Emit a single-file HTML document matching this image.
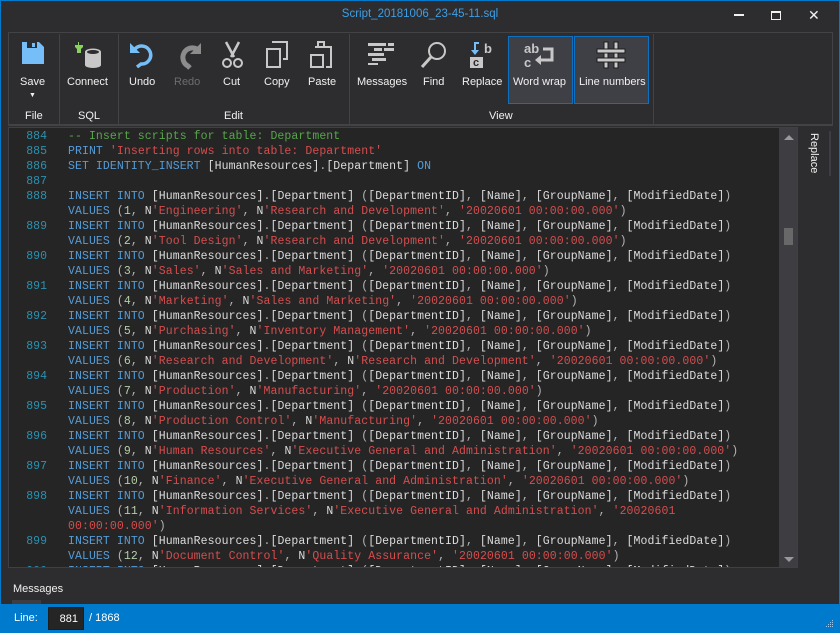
<!DOCTYPE html>
<html><head><meta charset="utf-8"><style>
*{margin:0;padding:0;box-sizing:border-box}
body{width:840px;height:633px;background:#2d2d30;overflow:hidden;position:relative;font-family:"Liberation Sans",sans-serif;font-size:11px;color:#f1f1f1}
.win{position:absolute;left:0;top:0;width:840px;height:633px;border:1px solid #007acc;border-bottom:none}
.title{position:absolute;top:8px;left:0;width:840px;text-align:center;color:#3d9fe6;font-size:11.5px}
.ctl{position:absolute;top:6px;color:#f1f1f1}
.ribbon{position:absolute;left:8px;top:32px;width:825px;height:94px;border:1px solid #434346;border-bottom:2px solid #434346}
.sep{position:absolute;top:34px;width:1px;height:90px;background:#434346}
.btn{position:absolute;top:76px;text-align:center;font-size:11px;color:#f1f1f1;white-space:nowrap}
.grp{position:absolute;top:110px;font-size:11px;color:#f1f1f1;text-align:center}
.ico{position:absolute}
.sel{position:absolute;top:36px;height:68px;border:1px solid #0e70c0;background:#3f3f46}
.ed{position:absolute;left:8px;top:127px;width:790px;height:441px;background:#252526;border:1px solid #3f3f46;overflow:hidden}
.code{position:absolute;left:0;top:1px;font-family:"Liberation Mono",monospace;font-size:11.5px;letter-spacing:0.08px;line-height:15px;color:#dcdcdc;white-space:pre}
.ln{display:inline-block;width:38px;text-align:right;color:#2b91af;margin-right:21px;letter-spacing:0}
.k{color:#569cd6}.s{color:#d64d4d}.p{color:#b4b4b4}.n{color:#b5cea8}.c{color:#57a64a}
.sb{position:absolute;left:770px;top:0;width:19px;height:439px;background:#3e3e42}
.status{position:absolute;left:0;top:604px;width:840px;height:29px;background:#007acc;color:#fff}
</style></head><body>
<div class="win"></div>
<div class="title">Script_20181006_23-45-11.sql</div>
<div class="ctl" style="left:734px;top:14px;width:10px;height:2px;background:#f1f1f1"></div>
<div class="ctl" style="left:771px;top:11px;width:10px;height:9px;border:1.5px solid #f1f1f1;border-top-width:2px"></div>
<div class="ctl" style="left:808px;top:7px;font-size:14px">✕</div>

<div class="ribbon"></div>
<div class="sep" style="left:59px"></div>
<div class="sep" style="left:118px"></div>
<div class="sep" style="left:349px"></div>
<div class="sep" style="left:653px"></div>

<div class="sel" style="left:508px;width:65px"></div>
<div class="sel" style="left:574px;width:75px"></div>

<svg class="ico" style="left:21px;top:41px" width="24" height="24"><path d="M1 1h17l5 5v17H1z" fill="#75bef8"/><rect x="6" y="1" width="10" height="6" fill="#2d2d30"/><rect x="11" y="2" width="3" height="4" fill="#75bef8"/></svg>
<svg class="ico" style="left:74px;top:41px" width="30" height="28"><path d="M3 1v3M7 1v3M1 4h8v2l-2 2v4H3V8L1 6z" fill="#8bd15f" stroke="none"/><rect x="4" y="1" width="1" height="3" fill="#8bd15f"/><ellipse cx="19" cy="11" rx="8" ry="3.5" fill="#c8c8c8"/><rect x="11" y="11" width="16" height="13" fill="#c8c8c8"/><ellipse cx="19" cy="24" rx="8" ry="3" fill="#c8c8c8"/><ellipse cx="19" cy="11" rx="6" ry="2" fill="#2d2d30"/></svg>
<svg class="ico" style="left:129px;top:40px" width="26" height="28"><path d="M6 9a9 9 0 1 1 6 15l-4 3" fill="none" stroke="#75bef8" stroke-width="3.5"/><path d="M1 3v10h10z" fill="#75bef8"/></svg>
<svg class="ico" style="left:173px;top:40px" width="30" height="30"><path d="M24 9a9 9 0 1 0-9 17l2 2" fill="none" stroke="#8c8c8c" stroke-width="5"/><path d="M28 3v11H17z" fill="#8c8c8c"/></svg>
<svg class="ico" style="left:220px;top:41px" width="26" height="28"><path d="M6 1l8 15M19 1l-8 15" stroke="#c8c8c8" stroke-width="2.5"/><circle cx="7" cy="22" r="4" fill="none" stroke="#c8c8c8" stroke-width="2"/><circle cx="18" cy="22" r="4" fill="none" stroke="#c8c8c8" stroke-width="2"/></svg>
<svg class="ico" style="left:265px;top:41px" width="26" height="28"><path d="M7 1h15v17h-4" fill="none" stroke="#c8c8c8" stroke-width="2"/><rect x="2" y="8" width="13" height="18" fill="none" stroke="#c8c8c8" stroke-width="2"/></svg>
<svg class="ico" style="left:309px;top:41px" width="26" height="28"><rect x="9" y="1" width="6" height="5" fill="none" stroke="#c8c8c8" stroke-width="2"/><path d="M6 6h16v20h-5" fill="none" stroke="#c8c8c8" stroke-width="2"/><rect x="2" y="14" width="12" height="12" fill="none" stroke="#c8c8c8" stroke-width="2"/></svg>
<svg class="ico" style="left:368px;top:43px" width="26" height="22"><g fill="#c8c8c8"><rect x="0" y="0" width="18" height="3"/><rect x="20" y="0" width="6" height="3"/><rect x="6" y="5" width="8" height="3"/><rect x="16" y="5" width="10" height="3"/><rect x="0" y="10" width="16" height="3"/><rect x="4" y="15" width="14" height="3"/><rect x="0" y="20" width="10" height="2"/></g></svg>
<svg class="ico" style="left:420px;top:41px" width="28" height="28"><circle cx="17" cy="10" r="8" fill="none" stroke="#c8c8c8" stroke-width="2"/><path d="M11 16L2 26" stroke="#c8c8c8" stroke-width="3"/></svg>
<svg class="ico" style="left:469px;top:41px" width="28" height="28"><path d="M10 2H6v9" fill="none" stroke="#75bef8" stroke-width="2"/><path d="M2 9h8l-4 5z" fill="#75bef8"/><rect x="1" y="16" width="13" height="11" fill="#c8c8c8"/><text x="4" y="25" font-size="11" font-weight="bold" fill="#2d2d30" font-family="Liberation Sans">c</text><text x="15" y="12" font-size="13" font-weight="bold" fill="#c8c8c8" font-family="Liberation Sans">b</text></svg>
<svg class="ico" style="left:524px;top:41px" width="34" height="28"><text x="0" y="12" font-size="13" font-weight="bold" fill="#c8c8c8" font-family="Liberation Sans">ab</text><text x="0" y="26" font-size="13" font-weight="bold" fill="#c8c8c8" font-family="Liberation Sans">c</text><path d="M19 8h9v11H14" fill="none" stroke="#c8c8c8" stroke-width="3"/><path d="M11 19l6-5v10z" fill="#c8c8c8"/></svg>
<svg class="ico" style="left:596px;top:41px" width="30" height="28"><g fill="#c8c8c8" stroke="#1e1e1e" stroke-width="1"><rect x="8" y="1" width="4" height="26"/><rect x="18" y="1" width="4" height="26"/><rect x="1" y="8" width="28" height="4"/><rect x="1" y="17" width="28" height="4"/></g></svg>

<div class="btn" style="left:20px">Save</div>
<div class="btn" style="left:29px;top:92px;font-size:7px">▼</div>
<div class="btn" style="left:67px">Connect</div>
<div class="btn" style="left:129px">Undo</div>
<div class="btn" style="left:174px;color:#6d6d6d">Redo</div>
<div class="btn" style="left:223px">Cut</div>
<div class="btn" style="left:264px">Copy</div>
<div class="btn" style="left:308px">Paste</div>
<div class="btn" style="left:357px">Messages</div>
<div class="btn" style="left:423px">Find</div>
<div class="btn" style="left:462px">Replace</div>
<div class="btn" style="left:513px">Word wrap</div>
<div class="btn" style="left:579px">Line numbers</div>
<div class="grp" style="left:25px">File</div>
<div class="grp" style="left:78px">SQL</div>
<div class="grp" style="left:224px">Edit</div>
<div class="grp" style="left:489px">View</div>

<div class="ed"><div class="code"><span class="ln">884</span><span class="c">-- Insert scripts for table: Department</span>
<span class="ln">885</span><span class="k">PRINT</span> <span class="s">'Inserting rows into table: Department'</span>
<span class="ln">886</span><span class="k">SET IDENTITY_INSERT</span> [HumanResources]<span class="p">.</span>[Department] <span class="k">ON</span>
<span class="ln">887</span>
<span class="ln">888</span><span class="k">INSERT INTO</span> [HumanResources]<span class="p">.</span>[Department] <span class="p">(</span>[DepartmentID]<span class="p">,</span> [Name]<span class="p">,</span> [GroupName]<span class="p">,</span> [ModifiedDate]<span class="p">)</span>
<span class="ln"></span><span class="k">VALUES</span> <span class="p">(</span><span class="n">1</span><span class="p">,</span> N<span class="s">'Engineering'</span><span class="p">,</span> N<span class="s">'Research and Development'</span><span class="p">,</span> <span class="s">'20020601 00:00:00.000'</span><span class="p">)</span>
<span class="ln">889</span><span class="k">INSERT INTO</span> [HumanResources]<span class="p">.</span>[Department] <span class="p">(</span>[DepartmentID]<span class="p">,</span> [Name]<span class="p">,</span> [GroupName]<span class="p">,</span> [ModifiedDate]<span class="p">)</span>
<span class="ln"></span><span class="k">VALUES</span> <span class="p">(</span><span class="n">2</span><span class="p">,</span> N<span class="s">'Tool Design'</span><span class="p">,</span> N<span class="s">'Research and Development'</span><span class="p">,</span> <span class="s">'20020601 00:00:00.000'</span><span class="p">)</span>
<span class="ln">890</span><span class="k">INSERT INTO</span> [HumanResources]<span class="p">.</span>[Department] <span class="p">(</span>[DepartmentID]<span class="p">,</span> [Name]<span class="p">,</span> [GroupName]<span class="p">,</span> [ModifiedDate]<span class="p">)</span>
<span class="ln"></span><span class="k">VALUES</span> <span class="p">(</span><span class="n">3</span><span class="p">,</span> N<span class="s">'Sales'</span><span class="p">,</span> N<span class="s">'Sales and Marketing'</span><span class="p">,</span> <span class="s">'20020601 00:00:00.000'</span><span class="p">)</span>
<span class="ln">891</span><span class="k">INSERT INTO</span> [HumanResources]<span class="p">.</span>[Department] <span class="p">(</span>[DepartmentID]<span class="p">,</span> [Name]<span class="p">,</span> [GroupName]<span class="p">,</span> [ModifiedDate]<span class="p">)</span>
<span class="ln"></span><span class="k">VALUES</span> <span class="p">(</span><span class="n">4</span><span class="p">,</span> N<span class="s">'Marketing'</span><span class="p">,</span> N<span class="s">'Sales and Marketing'</span><span class="p">,</span> <span class="s">'20020601 00:00:00.000'</span><span class="p">)</span>
<span class="ln">892</span><span class="k">INSERT INTO</span> [HumanResources]<span class="p">.</span>[Department] <span class="p">(</span>[DepartmentID]<span class="p">,</span> [Name]<span class="p">,</span> [GroupName]<span class="p">,</span> [ModifiedDate]<span class="p">)</span>
<span class="ln"></span><span class="k">VALUES</span> <span class="p">(</span><span class="n">5</span><span class="p">,</span> N<span class="s">'Purchasing'</span><span class="p">,</span> N<span class="s">'Inventory Management'</span><span class="p">,</span> <span class="s">'20020601 00:00:00.000'</span><span class="p">)</span>
<span class="ln">893</span><span class="k">INSERT INTO</span> [HumanResources]<span class="p">.</span>[Department] <span class="p">(</span>[DepartmentID]<span class="p">,</span> [Name]<span class="p">,</span> [GroupName]<span class="p">,</span> [ModifiedDate]<span class="p">)</span>
<span class="ln"></span><span class="k">VALUES</span> <span class="p">(</span><span class="n">6</span><span class="p">,</span> N<span class="s">'Research and Development'</span><span class="p">,</span> N<span class="s">'Research and Development'</span><span class="p">,</span> <span class="s">'20020601 00:00:00.000'</span><span class="p">)</span>
<span class="ln">894</span><span class="k">INSERT INTO</span> [HumanResources]<span class="p">.</span>[Department] <span class="p">(</span>[DepartmentID]<span class="p">,</span> [Name]<span class="p">,</span> [GroupName]<span class="p">,</span> [ModifiedDate]<span class="p">)</span>
<span class="ln"></span><span class="k">VALUES</span> <span class="p">(</span><span class="n">7</span><span class="p">,</span> N<span class="s">'Production'</span><span class="p">,</span> N<span class="s">'Manufacturing'</span><span class="p">,</span> <span class="s">'20020601 00:00:00.000'</span><span class="p">)</span>
<span class="ln">895</span><span class="k">INSERT INTO</span> [HumanResources]<span class="p">.</span>[Department] <span class="p">(</span>[DepartmentID]<span class="p">,</span> [Name]<span class="p">,</span> [GroupName]<span class="p">,</span> [ModifiedDate]<span class="p">)</span>
<span class="ln"></span><span class="k">VALUES</span> <span class="p">(</span><span class="n">8</span><span class="p">,</span> N<span class="s">'Production Control'</span><span class="p">,</span> N<span class="s">'Manufacturing'</span><span class="p">,</span> <span class="s">'20020601 00:00:00.000'</span><span class="p">)</span>
<span class="ln">896</span><span class="k">INSERT INTO</span> [HumanResources]<span class="p">.</span>[Department] <span class="p">(</span>[DepartmentID]<span class="p">,</span> [Name]<span class="p">,</span> [GroupName]<span class="p">,</span> [ModifiedDate]<span class="p">)</span>
<span class="ln"></span><span class="k">VALUES</span> <span class="p">(</span><span class="n">9</span><span class="p">,</span> N<span class="s">'Human Resources'</span><span class="p">,</span> N<span class="s">'Executive General and Administration'</span><span class="p">,</span> <span class="s">'20020601 00:00:00.000'</span><span class="p">)</span>
<span class="ln">897</span><span class="k">INSERT INTO</span> [HumanResources]<span class="p">.</span>[Department] <span class="p">(</span>[DepartmentID]<span class="p">,</span> [Name]<span class="p">,</span> [GroupName]<span class="p">,</span> [ModifiedDate]<span class="p">)</span>
<span class="ln"></span><span class="k">VALUES</span> <span class="p">(</span><span class="n">10</span><span class="p">,</span> N<span class="s">'Finance'</span><span class="p">,</span> N<span class="s">'Executive General and Administration'</span><span class="p">,</span> <span class="s">'20020601 00:00:00.000'</span><span class="p">)</span>
<span class="ln">898</span><span class="k">INSERT INTO</span> [HumanResources]<span class="p">.</span>[Department] <span class="p">(</span>[DepartmentID]<span class="p">,</span> [Name]<span class="p">,</span> [GroupName]<span class="p">,</span> [ModifiedDate]<span class="p">)</span>
<span class="ln"></span><span class="k">VALUES</span> <span class="p">(</span><span class="n">11</span><span class="p">,</span> N<span class="s">'Information Services'</span><span class="p">,</span> N<span class="s">'Executive General and Administration'</span><span class="p">,</span> <span class="s">'20020601</span>
<span class="ln"></span><span class="s">00:00:00.000'</span><span class="p">)</span>
<span class="ln">899</span><span class="k">INSERT INTO</span> [HumanResources]<span class="p">.</span>[Department] <span class="p">(</span>[DepartmentID]<span class="p">,</span> [Name]<span class="p">,</span> [GroupName]<span class="p">,</span> [ModifiedDate]<span class="p">)</span>
<span class="ln"></span><span class="k">VALUES</span> <span class="p">(</span><span class="n">12</span><span class="p">,</span> N<span class="s">'Document Control'</span><span class="p">,</span> N<span class="s">'Quality Assurance'</span><span class="p">,</span> <span class="s">'20020601 00:00:00.000'</span><span class="p">)</span>
<span class="ln">900</span><span class="k">INSERT INTO</span> [HumanResources]<span class="p">.</span>[Department] <span class="p">(</span>[DepartmentID]<span class="p">,</span> [Name]<span class="p">,</span> [GroupName]<span class="p">,</span> [ModifiedDate]<span class="p">)</span></div>
<div class="sb"><div style="position:absolute;left:5px;top:7px;width:0;height:0;border-left:5px solid transparent;border-right:5px solid transparent;border-bottom:5px solid #999"></div><div style="position:absolute;left:5px;top:100px;width:9px;height:17px;background:#686868"></div><div style="position:absolute;left:5px;top:429px;width:0;height:0;border-left:5px solid transparent;border-right:5px solid transparent;border-top:5px solid #999"></div></div></div>

<div style="position:absolute;left:808px;top:133px;color:#f1f1f1;font-size:11px;writing-mode:vertical-rl">Replace</div>
<div style="position:absolute;left:829px;top:131px;width:2px;height:45px;background:#3e3e42"></div>

<div style="position:absolute;left:13px;top:583px;font-size:11px;color:#f1f1f1">Messages</div>
<div style="position:absolute;left:12px;top:600px;width:29px;height:4px;background:#3e3e42"></div>

<div class="status">
<div style="position:absolute;left:14px;top:8px;font-size:11px">Line:</div>
<div style="position:absolute;left:48px;top:3px;width:36px;height:23px;background:#252526;border:1px solid #1e1e1e;text-align:right;padding:5px 5px 0 0;font-size:11px">881</div>
<div style="position:absolute;left:89px;top:8px;font-size:11px">/ 1868</div>
<svg style="position:absolute;left:824px;top:16px" width="10" height="10"><g fill="#9cc8ee"><rect x="8" y="0" width="1" height="1"/><rect x="6" y="2" width="1" height="1"/><rect x="8" y="2" width="1" height="1"/><rect x="4" y="4" width="1" height="1"/><rect x="6" y="4" width="1" height="1"/><rect x="8" y="4" width="1" height="1"/><rect x="2" y="6" width="1" height="1"/><rect x="4" y="6" width="1" height="1"/><rect x="6" y="6" width="1" height="1"/><rect x="8" y="6" width="1" height="1"/></g></svg>
</div>
</body></html>
